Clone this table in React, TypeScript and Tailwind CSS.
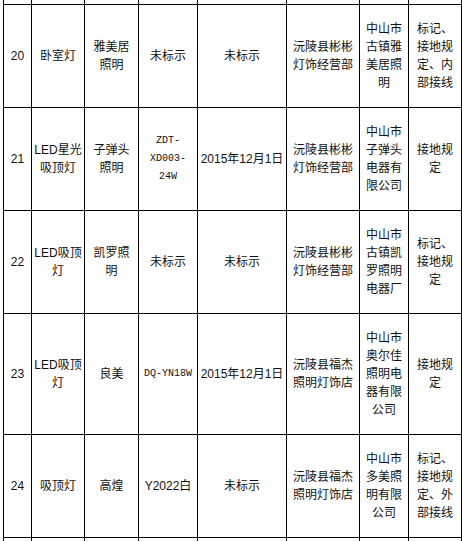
import React from "react";

type Cell = string[] | { mono: string[] };

const widths = ["w-[28px]", "w-[53px]", "w-[54px]", "w-[59px]", "w-[89px]", "w-[73px]", "w-[49px]", "w-[53px]"];

const rows: { h: string; cells: Cell[] }[] = [
  {
    h: "h-[103px]",
    cells: [
      ["20"],
      ["卧室灯"],
      ["雅美居", "照明"],
      ["未标示"],
      ["未标示"],
      ["沅陵县彬彬", "灯饰经营部"],
      ["中山市", "古镇雅", "美居照", "明"],
      ["标记、", "接地规", "定、内", "部接线"],
    ],
  },
  {
    h: "h-[103px]",
    cells: [
      ["21"],
      ["LED星光", "吸顶灯"],
      ["子弹头", "照明"],
      { mono: ["ZDT-", "XD003-", "24W"] },
      ["2015年12月1日"],
      ["沅陵县彬彬", "灯饰经营部"],
      ["中山市", "子弹头", "电器有", "限公司"],
      ["接地规", "定"],
    ],
  },
  {
    h: "h-[103px]",
    cells: [
      ["22"],
      ["LED吸顶", "灯"],
      ["凯罗照", "明"],
      ["未标示"],
      ["未标示"],
      ["沅陵县彬彬", "灯饰经营部"],
      ["中山市", "古镇凯", "罗照明", "电器厂"],
      ["标记、", "接地规", "定"],
    ],
  },
  {
    h: "h-[121px]",
    cells: [
      ["23"],
      ["LED吸顶", "灯"],
      ["良美"],
      { mono: ["DQ-YN18W"] },
      ["2015年12月1日"],
      ["沅陵县福杰", "照明灯饰店"],
      ["中山市", "奥尔佳", "照明电", "器有限", "公司"],
      ["接地规", "定"],
    ],
  },
  {
    h: "h-[103px]",
    cells: [
      ["24"],
      ["吸顶灯"],
      ["高煌"],
      ["Y2022白"],
      ["未标示"],
      ["沅陵县福杰", "照明灯饰店"],
      ["中山市", "多美照", "明有限", "公司"],
      ["标记、", "接地规", "定、外", "部接线"],
    ],
  },
];

function Row({ h, cells }: { h: string; cells?: Cell[] }) {
  return (
    <div className={`flex border-l border-b border-black ${h}`}>
      {widths.map((w, i) => {
        const c = cells?.[i];
        const mono = c && !Array.isArray(c);
        const lines = c ? (Array.isArray(c) ? c : c.mono) : [];
        return (
          <div
            key={i}
            className={`${w} shrink-0 border-r border-black flex flex-col items-center justify-center text-center leading-[18px] ${
              mono ? "text-[10px] font-['Liberation_Mono',monospace]" : "text-[12px]"
            }`}
          >
            {lines.map((l, j) => (
              <span key={j} className="whitespace-nowrap">
                {l}
              </span>
            ))}
          </div>
        );
      })}
    </div>
  );
}

export default function App() {
  return (
    <div className="w-[462px] h-[541px] overflow-hidden bg-white text-[#111] font-['Liberation_Sans','Noto_Sans_CJK_SC',sans-serif]">
      <div className="ml-[3px] w-[459px]">
        <Row h="h-[5px]" />
        {rows.map((r, i) => (
          <Row key={i} h={r.h} cells={r.cells} />
        ))}
        <Row h="h-[20px]" />
      </div>
    </div>
  );
}
